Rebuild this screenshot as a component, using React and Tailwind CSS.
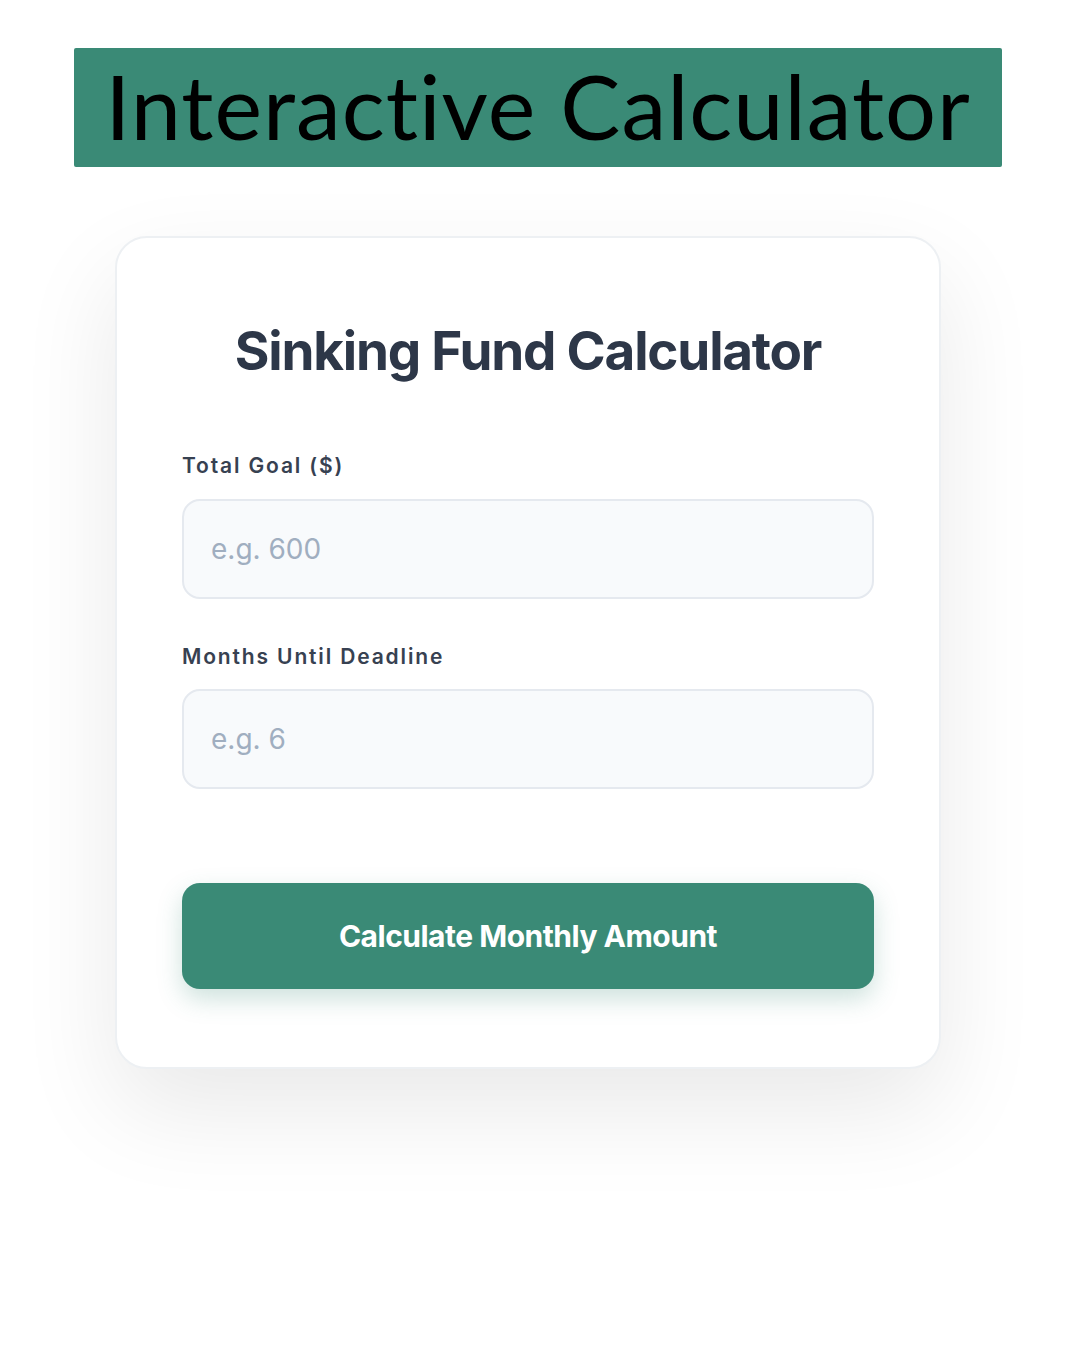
export default function App() {
  return (
    <div className="w-full min-h-[1350px] bg-white flex flex-col items-start" style={{ fontFamily: "Inter, 'Noto Sans', sans-serif" }}>
      <div className="ml-[74px] mt-[48px] w-[928px] h-[119px] bg-[#3a8a76] rounded-[2px] flex items-center justify-center">
        <h1 className="text-[90px] leading-none text-black tracking-[1px] font-normal pb-[6px]" style={{ fontFamily: "Lato, 'Open Sans', sans-serif" }}>
          Interactive Calculator
        </h1>
      </div>
      <div className="ml-[115px] mt-[69px] w-[826px] h-[833px] rounded-[32px] border-2 border-[#edf0f3] bg-white shadow-[0_40px_100px_rgba(0,0,0,0.09)] flex flex-col px-[65px] pt-[83px]">
        <h2 className="text-center text-[53px] leading-[60px] font-bold text-[#2d3748] tracking-[-1.2px]">
          Sinking Fund Calculator
        </h2>
        <label className="mt-[73px] text-[21px] leading-[24px] font-semibold text-[#374151] tracking-[1.85px]">Total Goal ($)</label>
        <input
          type="text"
          placeholder="e.g. 600"
          className="mt-[21px] h-[100px] w-full rounded-[18px] border-2 border-[#e5e9ef] bg-[#f8fafc] px-[27px] text-[28px] text-[#2d3748] placeholder:text-[#a0aec0] outline-none"
        />
        <label className="mt-[46px] text-[21px] leading-[24px] font-semibold text-[#374151] tracking-[1.85px]">Months Until Deadline</label>
        <input
          type="text"
          placeholder="e.g. 6"
          className="mt-[20px] h-[100px] w-full rounded-[18px] border-2 border-[#e5e9ef] bg-[#f8fafc] px-[27px] text-[28px] text-[#2d3748] placeholder:text-[#a0aec0] outline-none"
        />
        <button className="mt-[94px] h-[106px] w-full rounded-[18px] bg-[#3a8a76] text-white text-[30px] font-bold tracking-[-0.5px] shadow-[0_10px_24px_rgba(58,138,118,0.25)]">
          Calculate Monthly Amount
        </button>
      </div>
    </div>
  );
}
